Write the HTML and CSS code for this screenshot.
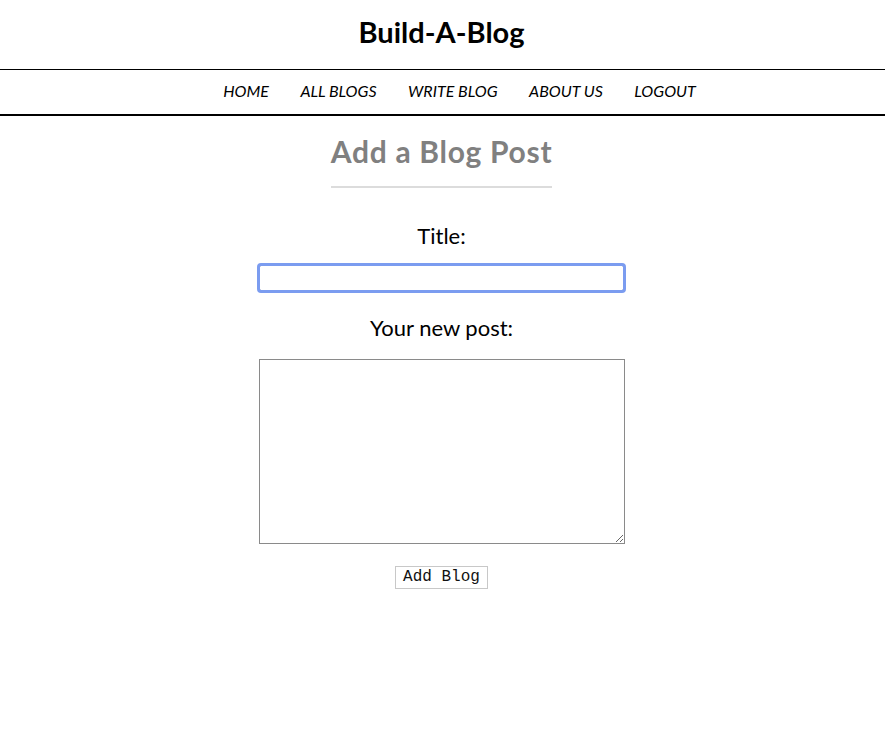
FILE: index.html
```html
<!DOCTYPE html>
<html>
<head>
<meta charset="utf-8">
<title>Build-A-Blog</title>
<link rel="stylesheet" href="styles.css">
</head>
<body>
<header class="site-header">
  <h1 class="site-title">Build-A-Blog</h1>
  <nav class="nav">
    <a href="#">HOME</a>
    <a href="#">ALL BLOGS</a>
    <a href="#">WRITE BLOG</a>
    <a href="#">ABOUT US</a>
    <a href="#">LOGOUT</a>
  </nav>
</header>
<main class="content">
  <h2 class="page-title">Add a Blog Post</h2>
  <form class="post-form">
    <label class="field-label" for="title">Title:</label>
    <input class="title-input" id="title" type="text">
    <label class="field-label field-label-body" for="body">Your new post:</label>
    <textarea class="body-input" id="body"></textarea>
    <button class="submit-btn" type="button">Add Blog</button>
  </form>
</main>
</body>
</html>
```
FILE: styles.css
```css
html, body {
  margin: 0;
  padding: 0;
  background: #fff;
}
body {
  font-family: Lato, "Liberation Sans", sans-serif;
  color: #000;
}
.site-header {
  text-align: center;
}
.site-title {
  margin: 0;
  height: 69px;
  line-height: 64px;
  font-size: 29px;
  font-weight: 700;
  padding-right: 2px;
  border-bottom: 1px solid #000;
}
.nav {
  display: flex;
  justify-content: center;
  gap: 31.5px;
  height: 44px;
  align-items: center;
  padding-left: 34px;
  border-bottom: 2px solid #000;
}
.nav a {
  color: #000;
  text-decoration: none;
  font-style: italic;
  font-size: 16px;
  line-height: 20px;
  padding-bottom: 2px;
}
.content {
  display: flex;
  flex-direction: column;
  align-items: center;
  padding-right: 2px;
}
.page-title {
  margin: 15px 0 0;
  font-size: 30px;
  font-weight: 700;
  color: #808080;
  letter-spacing: 0.7px;
  line-height: 40px;
  padding-bottom: 15px;
  border-bottom: 2px solid #dcdcdc;
}
.post-form {
  display: flex;
  flex-direction: column;
  align-items: center;
  margin-top: 33px;
}
.field-label {
  font-size: 22px;
  line-height: 30px;
}
.field-label-body {
  margin-top: 22px;
}
.title-input {
  box-sizing: border-box;
  margin-top: 14px;
  width: 365px;
  height: 26px;
  border: 1px solid #8a8a8a;
  border-radius: 2px;
  outline: 3px solid #7b9cf0;
  outline-offset: -1px;
  padding: 0 4px;
}
.body-input {
  box-sizing: border-box;
  margin-top: 16px;
  width: 366px;
  height: 185px;
  border: 1px solid #8a8a8a;
  resize: both;
}
.submit-btn {
  margin-top: 22px;
  font-family: "Liberation Mono", monospace;
  font-size: 16px;
  background: #fff;
  color: #111;
  border: 1px solid #c8c8c8;
  padding: 0 7px;
  height: 23px;
  line-height: 21px;
}
```
